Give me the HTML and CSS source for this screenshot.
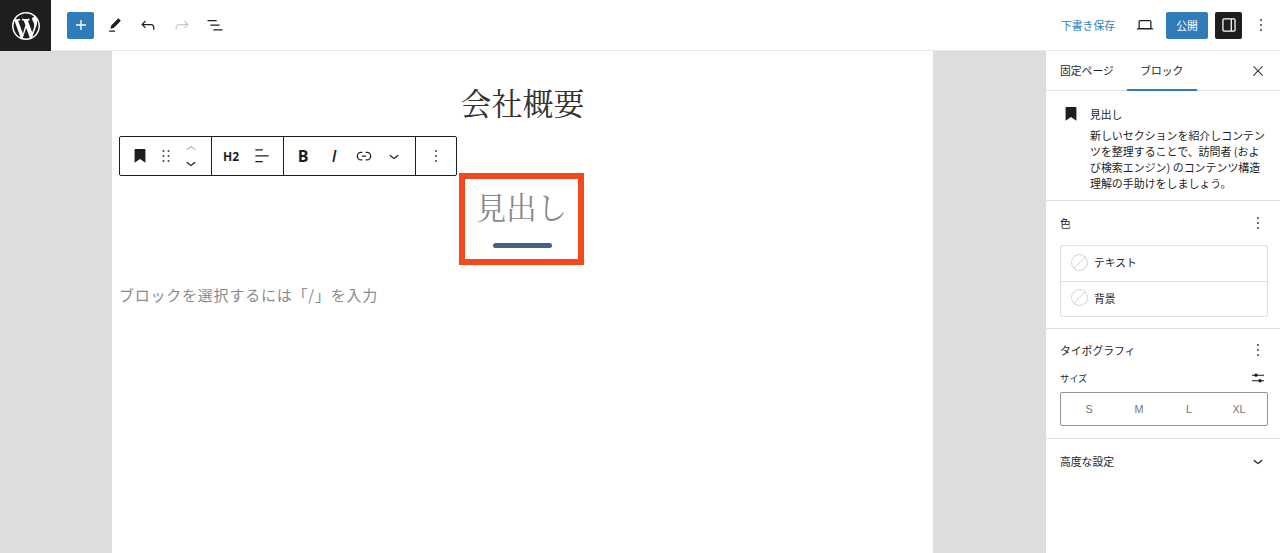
FILE: index.html
```html
<!DOCTYPE html>
<html lang="ja">

<head>
  <meta charset="UTF-8">
  <title>会社概要</title>
  <link rel="stylesheet" href="styles.css">
</head>

<body>
  <header class="topbar">
    <div class="wp-logo">
      <svg width="28" height="28" viewBox="0 0 20 20"><path fill="#fff" d="M20 10c0-5.51-4.49-10-10-10C4.48 0 0 4.49 0 10c0 5.52 4.48 10 10 10 5.51 0 10-4.48 10-10zM7.78 15.37L4.37 6.22c.55-.02 1.17-.08 1.17-.08.5-.06.44-1.13-.06-1.11 0 0-1.45.11-2.37.11-.18 0-.37 0-.58-.01C4.12 2.69 6.87 1.11 10 1.11c2.33 0 4.45.87 6.05 2.34-.68-.11-1.65.39-1.65 1.58 0 .74.45 1.36.9 2.1.35.61.55 1.36.55 2.46 0 1.49-1.4 5-1.4 5l-3.03-8.37c.54-.02.82-.17.82-.17.5-.05.44-1.25-.06-1.22 0 0-1.44.12-2.38.12-.87 0-2.33-.12-2.33-.12-.5-.03-.56 1.2-.06 1.22l.92.08 1.26 3.41zM17.41 10c.24-.64.74-1.87.43-4.25.7 1.29 1.05 2.71 1.05 4.25 0 3.29-1.73 6.24-4.4 7.78.97-2.59 1.94-5.2 2.92-7.78zM6.1 18.09C3.12 16.65 1.11 13.53 1.11 10c0-1.3.23-2.48.72-3.59C3.25 10.3 4.67 14.2 6.1 18.09zm4.03-6.63l2.58 6.98c-.86.29-1.76.45-2.71.45-.79 0-1.57-.11-2.29-.33.81-2.38 1.62-4.74 2.42-7.1z"/></svg>
    </div>
    <div class="tools-left">
      <button class="btn-add"><svg width="20" height="20" viewBox="0 0 24 24"><path fill="#fff" d="M18 11.2h-5.2V6h-1.6v5.2H6v1.6h5.2V18h1.6v-5.2H18z"/></svg></button>
      <span class="tool tool-pencil"><svg width="20" height="20" viewBox="0 0 24 24"><path d="m19 7-3-3-8.5 8.5-1 4 4-1L19 7Zm-7 11.5H5V20h7v-1.5Z"/></svg></span>
      <span class="tool"><svg width="20" height="20" viewBox="0 0 24 24"><path d="M18.3 11.7c-.6-.6-1.4-.9-2.3-.9H6.7l2.9-3.3-1.1-1-4.5 5L8.5 16l1-1-2.7-2.7H16c.5 0 .9.2 1.3.5 1 1 1 3.4 1 4.5v.3h1.5v-.2c0-1.5 0-4.3-1.5-5.7z"/></svg></span>
      <span class="tool"><svg width="20" height="20" viewBox="0 0 24 24"><path fill="#ccc" d="M15.6 6.5l-1.1 1 2.9 3.3H8c-.9 0-1.7.3-2.3.9-1.4 1.5-1.4 4.2-1.4 5.6v.2h1.5v-.3c0-1.1 0-3.5 1-4.5.3-.3.7-.5 1.3-.5h9.2L14.5 15l1.1 1.1 4.6-4.6-4.6-5z"/></svg></span>
      <span class="tool"><svg width="20" height="20" viewBox="0 0 24 24"><path d="M3 6h11v1.5H3V6Zm3.5 5.5h11V13h-11v-1.5ZM21 17H10v1.5h11V17Z"/></svg></span>
    </div>
    <div class="tools-right">
      <span class="save-draft">下書き保存</span>
      <span class="tool preview"><svg width="20" height="20" viewBox="0 0 24 24"><path d="M20.5 16h-.7V8c0-1.1-.9-2-2-2H6.2c-1.1 0-2 .9-2 2v8h-.7c-.8 0-1.5.7-1.5 1.5h20c0-.8-.7-1.5-1.5-1.5zM5.7 8c0-.3.2-.5.5-.5h11.6c.3 0 .5.2.5.5v7.6H5.7V8z"/></svg></span>
      <button class="btn-publish">公開</button>
      <button class="btn-sidebar"><svg width="20" height="20" viewBox="0 0 24 24"><path fill="#fff" d="M18 4H6c-1.1 0-2 .9-2 2v12c0 1.1.9 2 2 2h12c1.1 0 2-.9 2-2V6c0-1.1-.9-2-2-2zm-4 14.5H6c-.3 0-.5-.2-.5-.5V6c0-.3.2-.5.5-.5h8v13zm4.5-.5c0 .3-.2.5-.5.5h-2.5v-13H18c.3 0 .5.2.5.5v12z"/></svg></button>
      <span class="tool more"><svg width="20" height="20" viewBox="0 0 24 24"><path d="M13 19h-2v-2h2v2zm0-6h-2v-2h2v2zm0-6h-2V5h2v2z"/></svg></span>
    </div>
  </header>

  <div class="workspace">
    <main class="canvas">
      <div class="page">
        <h1 class="page-title">会社概要</h1>

        <!-- block toolbar floats over the content -->
        <div class="block-toolbar">
          <div class="tb-group tb-first">
            <svg width="20" height="20" viewBox="0 0 24 24"><path d="M6.2 3.5h11.6c.4 0 .7.3.7.7v16l-6.5-4.6-6.5 4.6v-16c0-.4.3-.7.7-.7z"/></svg>
            <svg class="drag" width="20" height="20" viewBox="0 0 24 24"><path d="M8 7h2V5H8v2zm0 6h2v-2H8v2zm0 6h2v-2H8v2zm6-14v2h2V5h-2zm0 8h2v-2h-2v2zm0 6h2v-2h-2v2z"/></svg>
            <span class="movers">
              <svg width="20" height="16" viewBox="0 4 24 16"><path fill="#bbb" d="M6.5 12.4L12 8l5.5 4.4-.9 1.2L12 10l-4.5 3.6-1-1.2z"/></svg>
              <svg class="mover-down" width="20" height="16" viewBox="0 4 24 16"><path d="M17.5 11.6L12 16l-5.5-4.4.9-1.2L12 14l4.5-3.6 1 1.2z"/></svg>
            </span>
          </div>
          <div class="tb-group tb-second">
            <span class="h2-label">H2</span>
            <svg width="20" height="20" viewBox="0 0 24 24"><path d="M13 5.5H4V4h9v1.5Zm7 7H4V11h16v1.5Zm-7 7H4V18h9v1.5Z"/></svg>
          </div>
          <div class="tb-group tb-third">
            <span class="fmt-bold">B</span>
            <span class="fmt-italic">I</span>
            <svg width="20" height="20" viewBox="0 0 24 24"><path d="M10 17.389H8.444A5.194 5.194 0 1 1 8.444 7H10v1.5H8.444a3.694 3.694 0 0 0 0 7.389H10v1.5ZM14 7h1.556a5.194 5.194 0 0 1 0 10.39H14v-1.5h1.556a3.694 3.694 0 0 0 0-7.39H14V7Zm-4.5 6h5v-1.5h-5V13Z"/></svg>
            <svg width="20" height="20" viewBox="0 0 24 24"><path d="M17.5 11.6L12 16l-5.5-4.4.9-1.2L12 14l4.5-3.6 1 1.2z"/></svg>
          </div>
          <div class="tb-group tb-last">
            <svg width="20" height="20" viewBox="0 0 24 24"><path d="M13 19h-2v-2h2v2zm0-6h-2v-2h2v2zm0-6h-2V5h2v2z"/></svg>
          </div>
        </div>

        <div class="heading-box">
          <h2 class="heading-text">見出し</h2>
          <div class="heading-bar"></div>
        </div>

        <p class="placeholder">ブロックを選択するには「/」を入力</p>
      </div>
    </main>

    <aside class="sidebar">
      <div class="tabs">
        <span class="tab">固定ページ</span>
        <span class="tab tab-active">ブロック</span>
        <svg class="tab-close" width="16" height="16" viewBox="0 0 24 24"><path d="M13 11.8l6.1-6.3-1-1-6.1 6.2-6.1-6.2-1 1 6.1 6.3-6.5 6.7 1 1 6.5-6.6 6.5 6.6 1-1z"/></svg>
      </div>

      <section class="block-card">
        <svg width="20" height="20" viewBox="0 0 24 24"><path d="M6.2 3.5h11.6c.4 0 .7.3.7.7v16l-6.5-4.6-6.5 4.6v-16c0-.4.3-.7.7-.7z"/></svg>
        <div class="block-info">
          <div class="block-name">見出し</div>
          <p class="block-desc">新しいセクションを紹介しコンテンツを整理することで、訪問者 (および検索エンジン) のコンテンツ構造理解の手助けをしましょう。</p>
        </div>
      </section>

      <section class="panel panel-color">
        <div class="panel-head">
          <span>色</span>
          <svg width="20" height="20" viewBox="0 0 24 24"><path d="M13 19h-2v-2h2v2zm0-6h-2v-2h2v2zm0-6h-2V5h2v2z"/></svg>
        </div>
        <div class="color-list">
          <div class="color-row"><span class="swatch"></span>テキスト</div>
          <div class="color-row"><span class="swatch"></span>背景</div>
        </div>
      </section>

      <section class="panel panel-type">
        <div class="panel-head">
          <span>タイポグラフィ</span>
          <svg width="20" height="20" viewBox="0 0 24 24"><path d="M13 19h-2v-2h2v2zm0-6h-2v-2h2v2zm0-6h-2V5h2v2z"/></svg>
        </div>
        <div class="size-head">
          <span>サイズ</span>
          <svg width="16" height="16" viewBox="0 0 24 24"><path d="M3 7h18v1.5H3zM3 15.5h18V17H3z"/><circle cx="9" cy="7.7" r="2.6"/><circle cx="15" cy="16.2" r="2.6"/></svg>
        </div>
        <div class="size-picker">
          <span>S</span><span>M</span><span>L</span><span>XL</span>
        </div>
      </section>

      <section class="panel-advanced">
        <span>高度な設定</span>
        <svg width="20" height="20" viewBox="0 0 24 24"><path d="M17.5 11.6L12 16l-5.5-4.4.9-1.2L12 14l4.5-3.6 1 1.2z"/></svg>
      </section>
    </aside>
  </div>
</body>

</html>
```

FILE: styles.css
```css
* {
  box-sizing: border-box;
}

html,
body {
  height: 100%;
}

body {
  margin: 0;
  overflow: hidden;
  display: flex;
  flex-direction: column;
  font-family: "Noto Sans CJK JP", "Liberation Sans", sans-serif;
  font-size: 10.8px;
  color: #1e1e1e;
  background-color: #fff;
}

svg {
  display: block;
  flex-shrink: 0;
  fill: #1e1e1e;
}

button {
  border: none;
  padding: 0;
  font-family: inherit;
}

/* top bar */
.topbar {
  height: 51px;
  flex-shrink: 0;
  display: flex;
  align-items: center;
  border-bottom: 1px solid #e8e8e8;
  background-color: #fff;
}

.wp-logo {
  width: 51px;
  height: 51px;
  margin-bottom: -1px;
  display: flex;
  align-items: center;
  justify-content: center;
  background-color: #1e1e1e;
}

.tools-left {
  display: flex;
  align-items: center;
  margin-left: 16px;
  gap: 13.5px;
}

.tool {
  display: flex;
}

.tool-pencil {
  margin-left: -3px;
}

.btn-add {
  width: 27px;
  height: 27px;
  display: flex;
  align-items: center;
  justify-content: center;
  border-radius: 2px;
  background-color: #2e7cba;
}

.tools-right {
  margin-left: auto;
  display: flex;
  align-items: center;
}

.save-draft {
  color: #2e7cba;
  margin-right: 20px;
}

.btn-publish {
  width: 42px;
  height: 27px;
  margin-left: 11px;
  border-radius: 2px;
  font-size: 10.8px;
  color: #fff;
  background-color: #2e7cba;
}

.btn-sidebar {
  width: 27px;
  height: 27px;
  margin-left: 7px;
  display: flex;
  align-items: center;
  justify-content: center;
  border-radius: 2px;
  background-color: #1e1e1e;
}

.more {
  margin-left: 9px;
  margin-right: 9px;
}

/* editor canvas */
.workspace {
  flex: 1;
  display: flex;
  min-height: 0;
}

.canvas {
  flex: 1;
  padding: 0 113px 0 112px;
  background-color: #ddd;
}

.page {
  position: relative;
  height: 100%;
  display: flex;
  flex-direction: column;
  align-items: center;
  background-color: #fff;
}

.page-title {
  margin: 29px 0 0;
  font-family: "Noto Serif CJK JP", "Liberation Serif", "Noto Sans CJK JP", serif;
  font-size: 31px;
  line-height: 44px;
  font-weight: 400;
  color: #333;
}

.heading-box {
  width: 125px;
  height: 92px;
  margin-top: 49px;
  margin-left: -2px;
  display: flex;
  flex-direction: column;
  align-items: center;
  border: 6px solid #f2491d;
}

.heading-text {
  margin: 6px 0 0;
  font-family: "Noto Serif CJK JP", "Liberation Serif", "Noto Sans CJK JP", serif;
  font-size: 30.5px;
  line-height: 43px;
  font-weight: 400;
  color: #8a8a8a;
}

.heading-bar {
  width: 59px;
  height: 5px;
  margin-top: 15px;
  margin-left: 2px;
  border-radius: 3px;
  background-color: #43618f;
}

.placeholder {
  align-self: flex-start;
  margin: 20px 0 0 7px;
  font-size: 15px;
  line-height: 20px;
  letter-spacing: 0.77px;
  color: #8a8a8a;
}

.block-toolbar {
  position: absolute;
  left: 7px;
  top: 85px;
  width: 338px;
  height: 40px;
  display: flex;
  border: 1px solid #1e1e1e;
  border-radius: 2px;
  background-color: #fff;
}

.tb-group {
  display: flex;
  align-items: center;
  border-right: 1px solid #1e1e1e;
}

.tb-first {
  width: 92px;
  padding-left: 10px;
  gap: 5px;
}

.drag {
  margin-left: 1px;
}

.movers {
  display: flex;
  flex-direction: column;
}

.mover-down {
  margin-top: -2px;
}

.tb-second {
  width: 72px;
  padding-left: 11px;
  gap: 13px;
}

.h2-label {
  font-family: "Open Sans", "Liberation Sans", sans-serif;
  font-size: 12px;
  font-weight: 700;
}

.tb-third {
  width: 132px;
  padding-left: 12px;
}

.fmt-bold,
.fmt-italic {
  width: 14px;
  font-family: "Open Sans", "Liberation Sans", sans-serif;
  font-size: 16px;
  font-weight: 700;
  text-align: center;
}

.fmt-italic {
  margin-left: 17px;
  margin-right: 13px;
  font-style: italic;
  font-weight: 600;
}

.tb-third svg:last-child {
  margin-left: 10px;
}

.tb-last {
  flex: 1;
  justify-content: center;
  border-right: none;
}

/* settings sidebar */
.sidebar {
  width: 234px;
  flex-shrink: 0;
  background-color: #fff;
}

.tabs {
  height: 40px;
  display: flex;
  align-items: center;
  padding-left: 14px;
  border-bottom: 1px solid #e0e0e0;
}

.tab {
  height: 40px;
  line-height: 39px;
}

.tab-active {
  width: 70px;
  margin-left: 13px;
  text-align: center;
  border-bottom: 2px solid #2e7cba;
}

.tab-close {
  margin-left: auto;
  margin-right: 14px;
}

.block-card {
  height: 110px;
  display: flex;
  padding: 13px 12px 0 15px;
  border-bottom: 1px solid #e0e0e0;
}

.block-info {
  margin-left: 9px;
}

.block-name {
  line-height: 20px;
}

.block-desc {
  margin: 3px 0 0;
  font-size: 10.95px;
  line-height: 16px;
}

.panel {
  padding: 0 12px 0 14px;
  border-bottom: 1px solid #e0e0e0;
}

.panel-color {
  height: 128px;
}

.panel-type {
  height: 110px;
}

.panel-head {
  height: 44px;
  display: flex;
  align-items: center;
  justify-content: space-between;
}

.panel-type .panel-head {
  height: 42px;
}

.color-list {
  border: 1px solid #e0e0e0;
  border-radius: 2px;
}

.color-row {
  height: 35px;
  display: flex;
  align-items: center;
  gap: 6px;
  padding: 0 0 3px 10px;
}

.color-row + .color-row {
  border-top: 1px solid #e0e0e0;
}

/* empty swatch: circle with a diagonal line */
.swatch {
  width: 17px;
  height: 17px;
  border: 1px solid #d4d4d4;
  border-radius: 50%;
  background: linear-gradient(135deg, transparent 47%, #d4d4d4 47%, #d4d4d4 53%, transparent 53%);
}

.size-head {
  height: 14px;
  display: flex;
  align-items: center;
  justify-content: space-between;
  padding-right: 2px;
  font-size: 9.2px;
}

.size-picker {
  height: 34px;
  margin-top: 7px;
  display: grid;
  grid-template-columns: repeat(4, 50px);
  justify-content: center;
  align-items: center;
  text-align: center;
  font-family: "Liberation Sans", sans-serif;
  color: #757575;
  border: 1px solid #949494;
  border-radius: 2px;
}

.panel-advanced {
  height: 44px;
  display: flex;
  align-items: center;
  justify-content: space-between;
  padding: 0 12px 0 14px;
}
```
